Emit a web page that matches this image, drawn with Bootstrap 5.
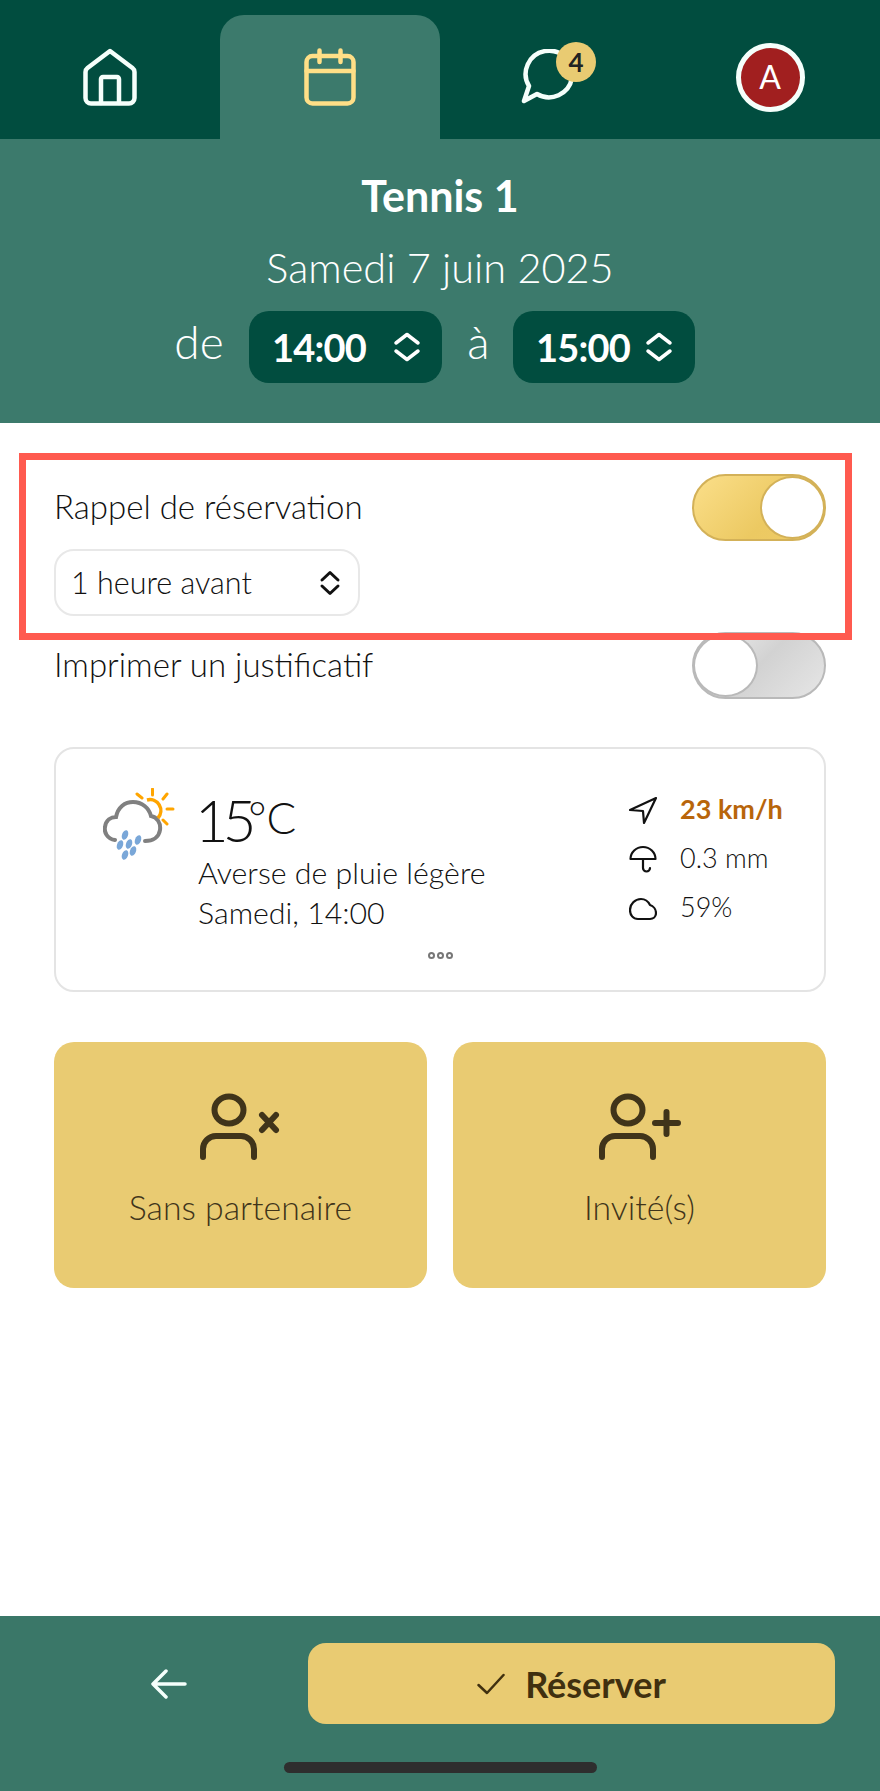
<!DOCTYPE html>
<html lang="fr">
<head>
  <meta charset="UTF-8" />
  <meta name="viewport" content="width=device-width, initial-scale=1" />
  <title>Tennis 1</title>
  <link href="https://cdn.jsdelivr.net/npm/bootstrap@5.3.0/dist/css/bootstrap.min.css" rel="stylesheet">
  <style>
    body {
      font-family: "Lato", "Liberation Sans", sans-serif;
      font-weight: 300;
      color: #111;
      background: #fff;
    }
    .app-page { width: 880px; min-height: 1791px; position: relative; }

    /* top tabs */
    .top-tabs { background: #014d3f; height: 139px; padding-top: 15px; }
    .top-tab { width: 220px; height: 124px; }
    .top-tab.on { background: #3c7a6c; border-radius: 24px 24px 0 0; }
    .chat-wrap { width: 60px; height: 56px; margin-left: 2px; }
    .chat-badge {
      top: -7px; left: 35px; width: 40px; height: 40px;
      background: #e9cb72; color: #222; font-size: 26px; font-weight: 700;
    }
    .avatar-ring {
      width: 69px; height: 69px; background: #a11f1f; border: 5px solid #f5fffb;
      color: #fff; font-size: 32px; font-weight: 400;
    }

    /* booking head */
    .book-head { background: #3c7a6c; color: #fff; height: 284px; padding-top: 32px; }
    .book-title { font-size: 43px; font-weight: 700; line-height: 50px; }
    .book-date { font-size: 41.500px; line-height: 50px; margin-top: 21px; }
    .time-row { margin-top: 19px; padding-left: 174px; font-size: 46px; }
    .time-pick {
      height: 72px; background: #014d3f; border-radius: 20px; font-weight: 700;
      font-size: 38px; letter-spacing: -0.8px; color: #fff;
    }
    .time-a { width: 193px; padding: 0 21px 0 23px; margin: 0 24px 0 25px; }
    .time-b { width: 182px; padding: 0 22px 0 23px; margin-left: 22px; }
    .time-word { line-height: 60px; margin-bottom: 10px; text-align: center; }
    .word-de { width: 50px; }
    .word-a { width: 25px; }

    /* options */
    .book-main { padding: 51px 54px 0; }
    .opt-label { font-size: 33px; line-height: 40px; margin-bottom: 3px; }
    .switch-box {
      width: 134px; height: 67px; border-radius: 34px; border: 2px solid #d3b158;
      background: linear-gradient(135deg, #fbdf8a, #ecc962 60%, #eecb66);
    }
    .switch-box.off {
      border-color: #b9b9b9; background: linear-gradient(135deg, #f2f2f2, #d2d2d2 50%, #e6e6e6);
    }
    .switch-knob { width: 65px; height: 63px; border-radius: 50%; background: #fff; border: 2px solid #d3b158; margin: 0 -1px; }
    .switch-box.off .switch-knob { border-color: #b9b9b9; }
    .remind-pick {
      width: 306px; height: 67px; margin-top: 8px; padding: 0 17px 0 15px;
      border: 2px solid #e8e8e8; border-radius: 20px; font-size: 30.500px;
    }
    .opt-second { margin-top: 16px; }
    .red-mark { left: 19px; top: 453px; width: 833px; height: 187px; border: 7px solid #ff5a4f; pointer-events: none; }

    /* weather */
    .meteo-box {
      height: 245px; margin-top: 48px; padding: 36px 41px 0 47px;
      border: 2px solid #e4e4e4; border-radius: 20px;
    }
    .meteo-icon { width: 72px; margin-right: 23px; padding-top: 3px; }
    .meteo-temp { height: 67px; line-height: 64px; font-size: 58px; letter-spacing: -6px; margin-left: -3px; }
    .meteo-temp span { font-size: 44px; letter-spacing: 0; vertical-align: 8px; margin-left: -2px; }
    .meteo-line { font-size: 30.300px; line-height: 40px; }
    .meteo-side { width: 154px; }
    .meteo-row { height: 49px; font-size: 27px; gap: 23px; }
    .meteo-wind { color: #b8650b; font-weight: 700; white-space: nowrap; }
    .dots-row { bottom: 31px; left: 0; right: 0; gap: 2px; }
    .dots-row i { width: 7px; height: 7px; border-radius: 50%; border: 2px solid #777; }

    /* action tiles */
    .tile-row { margin-top: 50px; gap: 26px; }
    .tile-btn {
      width: 373px; height: 246px; padding-top: 51px; background: #e9cb72;
      border-radius: 20px; color: #40341a; font-size: 33.800px; line-height: 40px; gap: 26px;
    }

    /* bottom bar */
    .bottom-bar { background: #3a7768; height: 175px; padding-top: 27px; }
    .back-arrow { margin: 0 121px 0 151px; }
    .book-btn {
      width: 527px; height: 81px; background: #e9cb72; border-radius: 18px;
      color: #40300f; font-size: 36px; font-weight: 700; gap: 20px;
    }
    .home-bar { width: 313px; height: 11px; margin: 38px auto 0; background: #2e2e2e; border-radius: 6px; }
  </style>
</head>
<body>
  <div class="app-page d-flex flex-column">

    <!-- Tabs -->
    <nav class="top-tabs d-flex">
      <div class="top-tab d-flex align-items-center justify-content-center">
        <svg width="54" height="58" viewBox="0 0 54 58" fill="none" stroke="#f5fffb" stroke-width="4.5" stroke-linejoin="round" stroke-linecap="round">
          <path d="M27 3L4.5 20Q2.5 21.5 2.500 24V50a5.500 5.500 0 0 0 5.500 5.500H46a5.500 5.500 0 0 0 5.500-5.500V24Q51.500 21.500 49.500 20Z"/>
          <path d="M18 55V31a2 2 0 0 1 2-2H34a2 2 0 0 1 2 2V55"/>
        </svg>
      </div>
      <div class="top-tab on d-flex align-items-center justify-content-center">
        <svg width="52" height="58" viewBox="0 0 52 58" fill="none" stroke="#ffdf87" stroke-width="4.5" stroke-linecap="round">
          <rect x="2.500" y="8" width="47" height="47.500" rx="6"/>
          <path d="M2.500 23H49.500M15.500 2.500V14M36.500 2.500V14"/>
        </svg>
      </div>
      <div class="top-tab d-flex align-items-center justify-content-center">
        <span class="chat-wrap position-relative d-block">
          <svg width="60" height="56" viewBox="0 0 60 56" fill="none" stroke="#f5fffb" stroke-width="4.5" stroke-linejoin="round">
            <path d="M16 45A23.300 23.300 0 1 0 8 37L3 52Z"/>
          </svg>
          <span class="chat-badge position-absolute rounded-circle d-flex align-items-center justify-content-center">4</span>
        </span>
      </div>
      <div class="top-tab d-flex align-items-center justify-content-center">
        <span class="avatar-ring rounded-circle d-flex align-items-center justify-content-center">A</span>
      </div>
    </nav>

    <!-- Booking head -->
    <header class="book-head text-center">
      <div class="book-title">Tennis 1</div>
      <div class="book-date">Samedi 7 juin 2025</div>
      <div class="time-row d-flex align-items-center">
        <span class="time-word word-de">de</span>
        <div class="time-pick time-a d-flex align-items-center justify-content-between">
          <span>14:00</span>
          <svg width="28" height="30" viewBox="0 0 28 30" fill="none" stroke="#fff" stroke-width="3.500" stroke-linecap="round" stroke-linejoin="round"><path d="M3 11L14 2.500L25 11M3 19L14 27.500L25 19"/></svg>
        </div>
        <span class="time-word word-a">à</span>
        <div class="time-pick time-b d-flex align-items-center justify-content-between">
          <span>15:00</span>
          <svg width="28" height="30" viewBox="0 0 28 30" fill="none" stroke="#fff" stroke-width="3.500" stroke-linecap="round" stroke-linejoin="round"><path d="M3 11L14 2.500L25 11M3 19L14 27.500L25 19"/></svg>
        </div>
      </div>
    </header>

    <main class="book-main flex-grow-1">
      <div class="d-flex justify-content-between align-items-center">
        <span class="opt-label">Rappel de réservation</span>
        <span class="switch-box d-flex justify-content-end"><span class="switch-knob"></span></span>
      </div>
      <div class="remind-pick d-flex align-items-center justify-content-between">
        <span>1 heure avant</span>
        <svg width="22" height="26" viewBox="0 0 22 26" fill="none" stroke="#111" stroke-width="3" stroke-linecap="round" stroke-linejoin="round"><path d="M3 10L11 2.500L19 10M3 16L11 23.500L19 16"/></svg>
      </div>
      <div class="opt-second d-flex justify-content-between align-items-center">
        <span class="opt-label">Imprimer un justificatif</span>
        <span class="switch-box off d-flex"><span class="switch-knob"></span></span>
      </div>

      <!-- Weather -->
      <section class="meteo-box position-relative d-flex">
        <div class="meteo-icon">
          <svg width="72" height="72" viewBox="0 -2 72 72" fill="none">
            <path d="M12 50C4 49 1 42 2 37C3 30 8 27 13 27C15 17 22 12 30 12C39 12 46 18 48 26C54 27 58 33 57 40C56 47 50 51 42 51" stroke="#808080" stroke-width="4" stroke-linecap="round"/>
            <path d="M44 10A11 11 0 0 1 55 28" stroke="#ffa500" stroke-width="3.500"/>
            <path d="M49.500 -1V5M64 4L60 9M64 19H70M60 30L64 34M34 4L39 8" stroke="#ffa500" stroke-width="3" stroke-linecap="round"/>
            <g fill="#7aa7d8">
              <ellipse cx="22" cy="45" rx="3" ry="5" transform="rotate(20 22 45)"/>
              <ellipse cx="17" cy="55" rx="3" ry="5" transform="rotate(20 17 55)"/>
              <ellipse cx="26" cy="54" rx="3" ry="5" transform="rotate(20 26 54)"/>
              <ellipse cx="35" cy="50" rx="3" ry="5" transform="rotate(20 35 50)"/>
              <ellipse cx="30" cy="61" rx="3" ry="5" transform="rotate(20 30 61)"/>
              <ellipse cx="22" cy="65" rx="3" ry="5" transform="rotate(20 22 65)"/>
            </g>
          </svg>
        </div>
        <div class="flex-grow-1">
          <div class="meteo-temp">15<span>°C</span></div>
          <div class="meteo-line">Averse de pluie légère</div>
          <div class="meteo-line">Samedi, 14:00</div>
        </div>
        <div class="meteo-side">
          <div class="meteo-row d-flex align-items-center">
            <svg width="28" height="28" viewBox="0 0 28 28" fill="none" stroke="#111" stroke-width="2.200" stroke-linejoin="round"><path d="M27 2L1 14L14 15L15 27Z"/></svg>
            <span class="meteo-wind">23 km/h</span>
          </div>
          <div class="meteo-row d-flex align-items-center">
            <svg width="28" height="28" viewBox="0 0 28 28" fill="none" stroke="#111" stroke-width="2.200" stroke-linecap="round" stroke-linejoin="round"><path d="M1.500 14A12.500 12 0 0 1 26.500 14ZM14 14V23a3.500 3.500 0 0 0 7 0"/></svg>
            <span>0.3 mm</span>
          </div>
          <div class="meteo-row d-flex align-items-center">
            <svg width="28" height="28" viewBox="0 0 28 28" fill="none" stroke="#111" stroke-width="2.200" stroke-linejoin="round"><path d="M9 25C4 25 1 21 1 16C1 10 6 5 12 5C16 5 19 7 21 11C24 12 27 15 27 19C27 23 24 25 21 25Z"/></svg>
            <span>59%</span>
          </div>
        </div>
        <div class="dots-row position-absolute d-flex justify-content-center"><i></i><i></i><i></i></div>
      </section>

      <!-- Partner tiles -->
      <div class="tile-row d-flex">
        <div class="tile-btn d-flex flex-column align-items-center">
          <svg width="82" height="68" viewBox="0 0 82 68" fill="none" stroke="#40341a" stroke-width="6" stroke-linecap="round">
            <ellipse cx="29" cy="17" rx="14.500" ry="13.500"/>
            <path d="M3 64V56a13 13 0 0 1 13-13H41a13 13 0 0 1 13 13V64"/>
            <path d="M62 22L76 37M76 22L62 37"/>
          </svg>
          <span>Sans partenaire</span>
        </div>
        <div class="tile-btn d-flex flex-column align-items-center">
          <svg width="82" height="68" viewBox="0 0 82 68" fill="none" stroke="#40341a" stroke-width="6" stroke-linecap="round">
            <ellipse cx="29" cy="17" rx="14.500" ry="13.500"/>
            <path d="M3 64V56a13 13 0 0 1 13-13H41a13 13 0 0 1 13 13V64"/>
            <path d="M56 30H79M67.500 19V41"/>
          </svg>
          <span>Invité(s)</span>
        </div>
      </div>
    </main>

    <!-- Bottom bar -->
    <footer class="bottom-bar">
      <div class="d-flex align-items-center">
        <svg class="back-arrow" width="36" height="30" viewBox="0 0 36 30" fill="none" stroke="#f5fffb" stroke-width="3.500" stroke-linecap="round" stroke-linejoin="round"><path d="M15 2L2 15L15 28M2 15H34"/></svg>
        <div class="book-btn d-flex align-items-center justify-content-center">
          <svg width="28" height="22" viewBox="0 0 28 22" fill="none" stroke="#40300f" stroke-width="2.500" stroke-linecap="round" stroke-linejoin="round"><path d="M1.500 12L10 20L26.500 2"/></svg>
          <span>Réserver</span>
        </div>
      </div>
      <div class="home-bar"></div>
    </footer>

    <!-- Highlight over the reminder option -->
    <div class="red-mark position-absolute"></div>
  </div>

  <script src="https://cdn.jsdelivr.net/npm/bootstrap@5.3.0/dist/js/bootstrap.bundle.min.js"></script>
</body>
</html>
